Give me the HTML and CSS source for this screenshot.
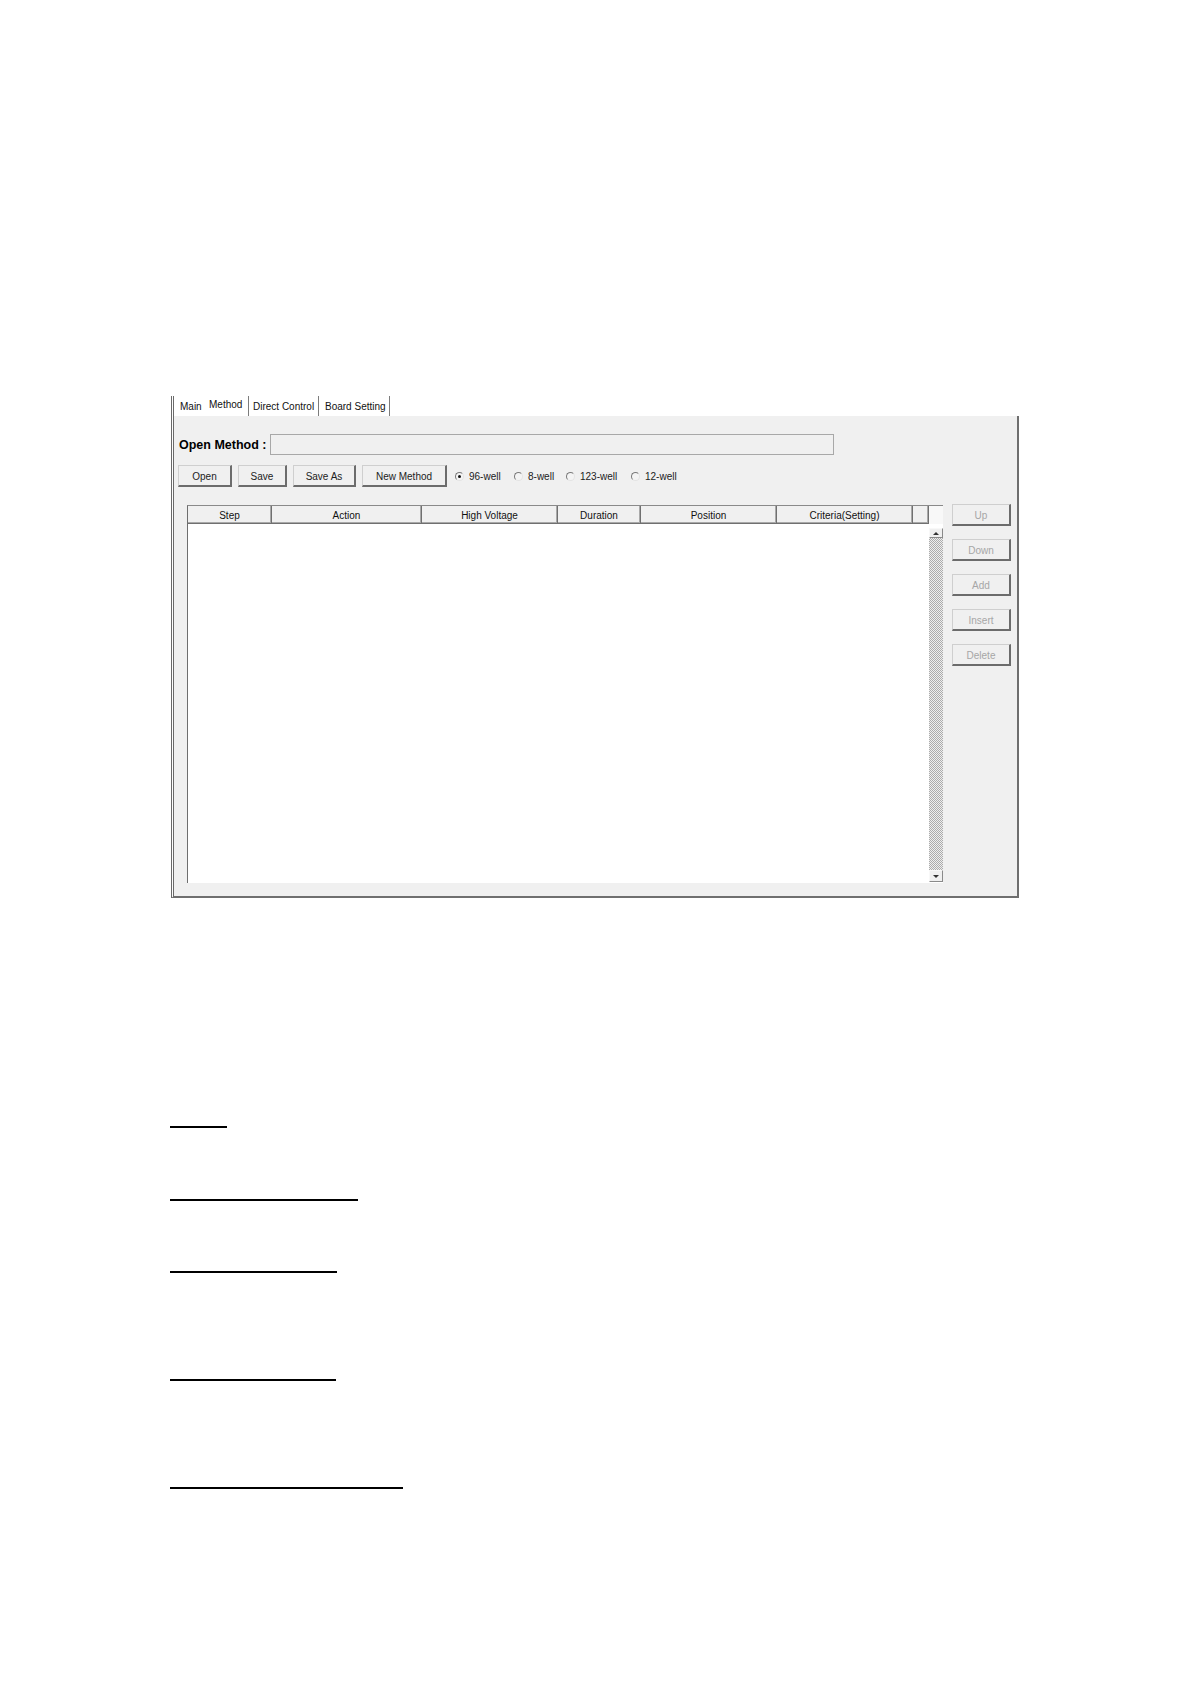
FILE: index.html
```html
<!DOCTYPE html>
<html lang="en">
<head>
<meta charset="utf-8">
<title>Method</title>
<link rel="stylesheet" href="styles.css">
</head>
<body>
<div class="page">
  <div class="window">
    <div class="tabs">
      <div class="tab tab-main">Main</div>
      <div class="tab tab-method">Method</div>
      <div class="tab tab-direct">Direct Control</div>
      <div class="tab tab-board">Board Setting</div>
    </div>
    <div class="panel">
      <div class="row-open">
        <label class="open-label">Open Method :</label>
        <div class="open-field"></div>
      </div>
      <div class="row-buttons">
        <button class="btn btn-open">Open</button>
        <button class="btn btn-save">Save</button>
        <button class="btn btn-saveas">Save As</button>
        <button class="btn btn-new">New Method</button>
        <div class="radios">
          <div class="radio r1"><span class="dot checked"></span><span>96-well</span></div>
          <div class="radio r2"><span class="dot"></span><span>8-well</span></div>
          <div class="radio r3"><span class="dot"></span><span>123-well</span></div>
          <div class="radio r4"><span class="dot"></span><span>12-well</span></div>
        </div>
      </div>
      <div class="table-area">
        <div class="grid">
          <div class="grid-head">
            <div class="hc c-step">Step</div>
            <div class="hc c-action">Action</div>
            <div class="hc c-hv">High Voltage</div>
            <div class="hc c-dur">Duration</div>
            <div class="hc c-pos">Position</div>
            <div class="hc c-crit">Criteria(Setting)</div>
            <div class="hc c-blank"></div>
            <div class="head-corner"></div>
          </div>
          <div class="grid-body">
            <div class="rows"></div>
            <div class="scrollbar">
              <div class="sb-btn"><span class="tri-up"></span></div>
              <div class="sb-track"></div>
              <div class="sb-btn sb-down"><span class="tri-down"></span></div>
            </div>
          </div>
        </div>
        <div class="side">
          <button class="side-btn">Up</button>
          <button class="side-btn">Down</button>
          <button class="side-btn">Add</button>
          <button class="side-btn">Insert</button>
          <button class="side-btn">Delete</button>
        </div>
      </div>
    </div>
  </div>
  <div class="notes">
    <div class="rule rule-1"></div>
    <div class="rule rule-2"></div>
    <div class="rule rule-3"></div>
    <div class="rule rule-4"></div>
    <div class="rule rule-5"></div>
  </div>
</div>
</body>
</html>
```
FILE: styles.css
```css
* { box-sizing: border-box; }
html, body { margin: 0; padding: 0; background: #ffffff; }
body {
  font-family: "Liberation Sans", Arial, sans-serif;
  font-size: 10px;
  color: #111;
}
.page {
  padding-top: 396px;
  min-height: 1684px;
}
.window {
  margin-left: 171px;
  width: 848px;
  border-left: 3px double #6a6a6a;
  border-bottom: 2px solid #6f6f6f;
}

/* tabs */
.tabs {
  display: flex;
  height: 20px;
  background: #fff;
}
.tab {
  display: flex;
  align-items: center;
  height: 20px;
  font-size: 10px;
  color: #111;
  white-space: nowrap;
}
.tab-main { width: 35px; padding-left: 6px; }
.tab-method { width: 40px; padding-bottom: 3px; border-right: 1px solid #7c7c7c; }
.tab-direct { width: 70px; padding-left: 4px; border-right: 1px solid #7c7c7c; }
.tab-board { width: 71px; padding-left: 6px; border-right: 1px solid #7c7c7c; }

/* panel */
.panel {
  height: 480px;
  background: #f0f0f0;
  border-right: 2px solid #6f6f6f;
  padding-top: 18px;
}
.row-open {
  display: flex;
  align-items: center;
  height: 21px;
  padding-left: 5px;
}
.open-label {
  width: 91px;
  font-size: 12.5px;
  font-weight: bold;
  color: #000;
}
.open-field {
  width: 564px;
  height: 21px;
  border: 1px solid #a8a8a8;
  background: #f0f0f0;
}
.row-buttons {
  display: flex;
  align-items: center;
  height: 22px;
  margin-top: 10px;
  padding-left: 4px;
  gap: 6px;
}
.btn, .side-btn {
  font-family: "Liberation Sans", Arial, sans-serif;
  font-size: 10px;
  height: 22px;
  padding: 1px 0 0 0;
  background: #f0f0f0;
  border-style: solid;
  border-width: 1px 2px 2px 1px;
  border-color: #cfcfcf #6c6c6c #6c6c6c #cfcfcf;
  color: #222;
}
.btn-open { width: 54px; }
.btn-save { width: 49px; }
.btn-saveas { width: 63px; }
.btn-new { width: 85px; }
.radios {
  display: flex;
  align-items: center;
  margin-left: 2px;
  padding-top: 1px;
}
.radio {
  display: flex;
  align-items: center;
  gap: 5px;
  color: #222;
  font-size: 10px;
}
.r1 { width: 59px; }
.r2 { width: 52px; }
.r3 { width: 65px; }
.dot {
  width: 9px;
  height: 9px;
  border-radius: 50%;
  border: 1px solid;
  border-color: #7a7a7a #e4e4e4 #e4e4e4 #7a7a7a;
  background: #f4f4f4;
  display: flex;
  align-items: center;
  justify-content: center;
}
.dot.checked::after {
  content: "";
  width: 3px;
  height: 3px;
  border-radius: 50%;
  background: #111;
}

/* table */
.table-area {
  display: flex;
  margin-top: 18px;
  padding-left: 13px;
  gap: 9px;
}
.grid {
  width: 756px;
  height: 378px;
  border-top: 1px solid #8a8a8a;
  border-left: 1px solid #6e6e6e;
  background: #fff;
  display: flex;
  flex-direction: column;
}
.grid-head {
  display: flex;
  height: 18px;
  flex: none;
}
.hc {
  height: 18px;
  padding-top: 1px;
  background: #f0f0f0;
  border-right: 1px solid #707070;
  border-bottom: 1px solid #707070;
  box-shadow: inset -1px -1px #a9a9a9;
  display: flex;
  align-items: center;
  justify-content: center;
  font-size: 10px;
  color: #111;
  white-space: nowrap;
}
.c-step { width: 84px; }
.c-action { width: 150px; }
.c-hv { width: 136px; }
.c-dur { width: 83px; }
.c-pos { width: 136px; }
.c-crit { width: 136px; }
.c-blank { width: 16px; }
.head-corner {
  width: 14px;
  height: 18px;
  background: #f8f8f8;
}
.grid-body {
  flex: 1;
  display: flex;
}
.rows { flex: 1; background: #fff; }
.scrollbar {
  width: 14px;
  margin-top: 4px;
  margin-bottom: 1px;
  display: flex;
  flex-direction: column;
}
.sb-btn {
  height: 10px;
  background: #f0f0f0;
  border-style: solid;
  border-width: 1px;
  border-color: #f8f8f8 #8a8a8a #8a8a8a #f8f8f8;
  display: flex;
  align-items: center;
  justify-content: center;
}
.sb-down { height: 12px; }
.tri-up {
  width: 0; height: 0;
  border-left: 3px solid transparent;
  border-right: 3px solid transparent;
  border-bottom: 3px solid #333;
}
.tri-down {
  width: 0; height: 0;
  border-left: 3px solid transparent;
  border-right: 3px solid transparent;
  border-top: 3px solid #333;
}
.sb-track {
  flex: 1;
  background-color: #eeeeee;
  background-image: repeating-conic-gradient(#ababab 0 25%, #eeeeee 0 50%);
  background-size: 2px 2px;
}

.side {
  display: flex;
  flex-direction: column;
  gap: 13px;
  margin-top: -1px;
}
.side-btn {
  width: 59px;
  color: #a6a6a6;
}

/* underlines below */
.notes {
  margin-left: 170px;
}
.rule {
  height: 2px;
  background: #000;
}
.rule-1 { width: 57px; margin-top: 228px; }
.rule-2 { width: 188px; margin-top: 71px; }
.rule-3 { width: 167px; margin-top: 70px; }
.rule-4 { width: 166px; margin-top: 106px; }
.rule-5 { width: 233px; margin-top: 106px; }
```
